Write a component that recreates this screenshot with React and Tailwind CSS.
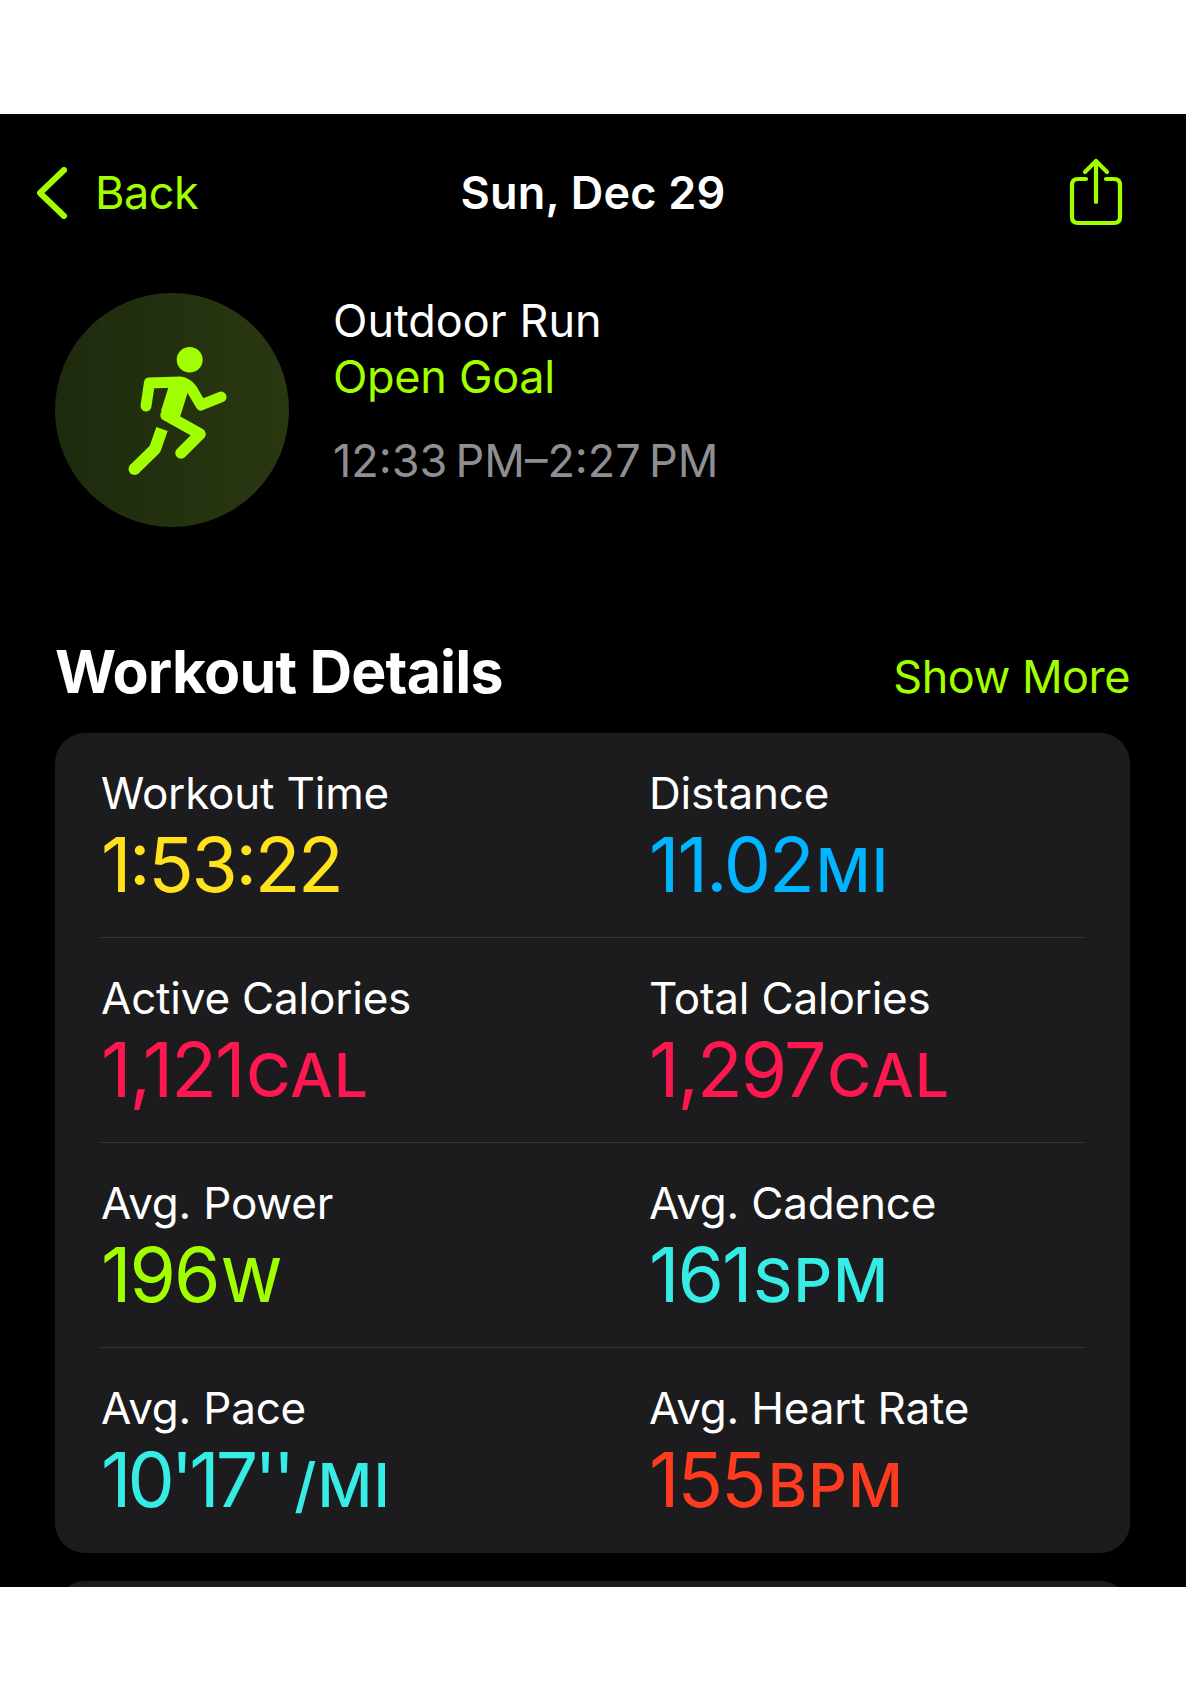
const metrics = [
  [
    { label: 'Workout Time', value: '1:53:22', color: 'text-[#ffe11c]', track: "tracking-[-2.4px] [font-feature-settings:'case']" },
    { label: 'Distance', value: '11.02', unit: 'MI', color: 'text-[#00b4ff]' },
  ],
  [
    { label: 'Active Calories', value: '1,121', unit: 'CAL', color: 'text-[#ff1750]' },
    { label: 'Total Calories', value: '1,297', unit: 'CAL', color: 'text-[#ff1750]' },
  ],
  [
    { label: 'Avg. Power', value: '196', unit: 'W', color: 'text-[#a2ff00]' },
    { label: 'Avg. Cadence', value: '161', unit: 'SPM', color: 'text-[#38ece6]' },
  ],
  [
    { label: 'Avg. Pace', value: "10'17''", unit: '/MI', color: 'text-[#38ece6]', track: 'tracking-[-4px]' },
    { label: 'Avg. Heart Rate', value: '155', unit: 'BPM', color: 'text-[#ff3b1f]' },
  ],
];

function RunnerIcon() {
  return (
    <svg viewBox="122 240 112 137" className="w-[112px] h-[137px] ml-[12px]" fill="none" stroke="#a2ff00" strokeLinecap="round" strokeLinejoin="round">
      <ellipse cx="189.7" cy="257.7" rx="13" ry="12.7" fill="#a2ff00" stroke="none" />
      <path d="M146 304 L149.4 281 L180 280 Q187 281 191.6 287 L201 303 L221 295" strokeWidth="11" />
      <path d="M179 285 L170.5 312" strokeWidth="20" strokeLinecap="butt" />
      <path d="M166 313 L200 332 L181 351" strokeWidth="11.5" />
      <path d="M162 327 L155 347 L134.5 367" strokeWidth="12" strokeLinecap="butt" />
      <circle cx="134.5" cy="367" r="6" fill="#a2ff00" stroke="none" />
    </svg>
  );
}

function Metric({ label, value, unit, color, track = 'tracking-[-2px]' }) {
  return (
    <div className="flex-1 min-w-0">
      <div className="text-[44px] leading-[52px] text-white tracking-[-0.2px]">{label}</div>
      <div className={`flex items-baseline mt-[3px] h-[86px] leading-[86px] ${color}`}>
        <span className={`text-[75px] font-normal ${track}`}>{value}</span>
        {unit && <span className="text-[60px] ml-[3px] font-medium tracking-[1.2px]">{unit}</span>}
      </div>
    </div>
  );
}

export default function App() {
  return (
    <div className="bg-white h-[1701px] pt-[114px] font-['Inter',sans-serif]">
      <div className="bg-black h-[1473px] overflow-hidden">
        {/* nav bar */}
        <div className="flex items-center justify-between h-[158px] pl-[37px] pr-[63px]">
          <div className="flex items-center w-[266px]">
            <svg viewBox="0 0 30 52" className="w-[30px] h-[52px]" fill="none" stroke="#a2ff00" strokeWidth="6" strokeLinecap="round" strokeLinejoin="round">
              <path d="M27 3 L3 26 L27 49" />
            </svg>
            <span className="ml-[28px] text-[45px] text-[#a2ff00] tracking-[-0.5px]">Back</span>
          </div>
          <div className="text-[45px] font-semibold text-white tracking-[0.2px]">Sun, Dec 29</div>
          <div className="w-[240px] flex justify-end">
            <svg viewBox="0 0 54 68" className="w-[54px] h-[68px] -mt-[2px]" fill="none" stroke="#a2ff00" strokeWidth="4.2" strokeLinecap="round" strokeLinejoin="round">
              <path d="M17 21 H9 Q3 21 3 27 V59 Q3 65 9 65 H45 Q51 65 51 59 V27 Q51 21 45 21 H37" />
              <path d="M27 44 V3 M16 14 L27 3 L38 14" />
            </svg>
          </div>
        </div>

        {/* workout summary */}
        <div className="flex items-start pl-[55px] mt-[21px]">
          <div className="w-[234px] h-[234px] rounded-full bg-gradient-to-r from-[#1e2a0d] to-[#293811] flex items-center justify-center">
            <RunnerIcon />
          </div>
          <div className="ml-[44px]">
            <div className="text-[45px] leading-[56px] text-white">Outdoor Run</div>
            <div className="text-[45px] leading-[56px] text-[#a2ff00] tracking-[-0.3px]">Open Goal</div>
            <div className="text-[45px] leading-[56px] mt-[28px] text-[#8e8e93] [font-feature-settings:'case']">12:33{'\u2009'}PM–2:27{'\u2009'}PM</div>
          </div>
        </div>

        {/* details header */}
        <div className="flex items-baseline justify-between pl-[55px] pr-[56px] mt-[112px]">
          <h2 className="text-[59px] leading-[66px] font-bold text-white tracking-[-0.8px]">Workout Details</h2>
          <span className="text-[45px] text-[#a2ff00] tracking-[-0.5px]">Show More</span>
        </div>

        <div className="ml-[55px] mr-[56px] mt-[22px] rounded-[30px] bg-[#1c1c1e] pl-[46px] pr-[45px]">
          {metrics.map((row, i) => (
            <div key={i} className={`flex h-[205px] pt-[34px] ${i < 3 ? 'border-b border-[#38383a]' : ''}`}>
              <div className="w-[548px] shrink-0"><Metric {...row[0]} /></div>
              <Metric {...row[1]} />
            </div>
          ))}
        </div>

        {/* next card, cut off by the screen edge */}
        <div className="ml-[55px] mr-[56px] mt-[28px] h-[40px] rounded-t-[30px] bg-[#1c1c1e]" />
      </div>
    </div>
  );
}
